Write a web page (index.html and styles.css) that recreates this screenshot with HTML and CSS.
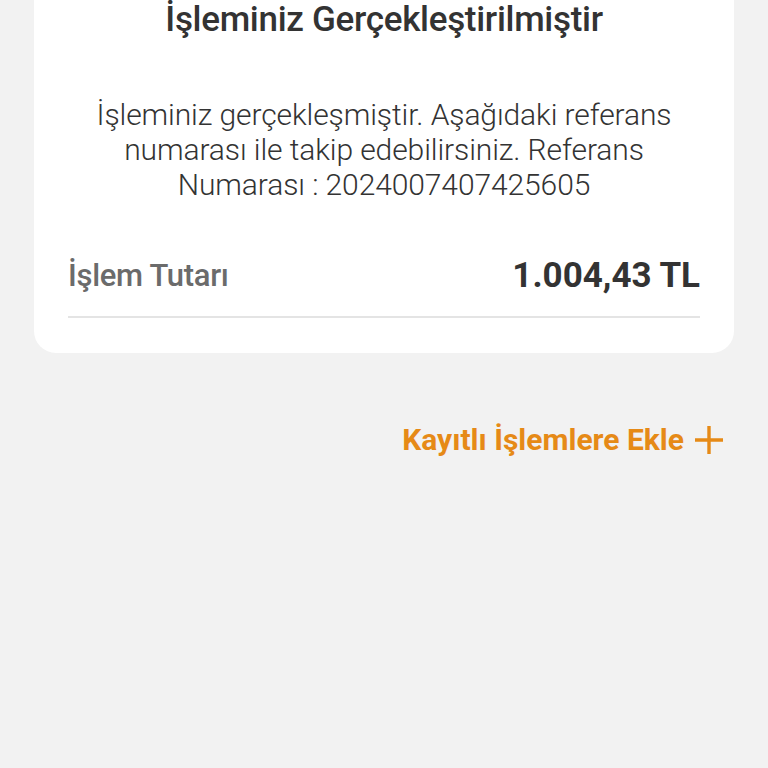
FILE: index.html
```html
<!DOCTYPE html>
<html lang="tr">
<head>
    <meta charset="UTF-8">
    <meta name="viewport" content="width=device-width, initial-scale=1.0">
    <title>İşlem Sonucu</title>
    <link rel="stylesheet" href="styles.css">
</head>
<body>

<div class="result-card">
    <h1 class="result-title">İşleminiz Gerçekleştirilmiştir</h1>

    <p class="result-text">
        İşleminiz gerçekleşmiştir. Aşağıdaki referans numarası ile takip edebilirsiniz. Referans Numarası : 2024007407425605
    </p>

    <div class="amount-row">
        <span class="amount-label">İşlem Tutarı</span>
        <span class="amount-value">1.004,43 TL</span>
    </div>
</div>

<div class="actions">
    <a href="#" class="save-link">
        Kayıtlı İşlemlere Ekle
        <svg class="plus-icon" viewBox="0 0 30 30" width="30" height="30">
            <path d="M15 1 V29 M1 15 H29" stroke="currentColor" stroke-width="3.4" fill="none"/>
        </svg>
    </a>
</div>

</body>
</html>
```

FILE: styles.css
```css
body {
    font-family: 'Roboto', sans-serif;
    background-color: #f2f2f2;
    color: #333;
    margin: 0;
    padding: 0;
}

.result-card {
    background-color: #fff;
    margin: -40px 34px 0;
    padding: 40px 34px 35px;
    border-radius: 22px;
}

.result-title {
    margin: 0;
    font-size: 35px;
    font-weight: 500;
    line-height: 40px;
    text-align: center;
    color: #333;
    letter-spacing: -0.3px;
}

.result-text {
    margin: 57px 20px 0;
    font-size: 30px;
    font-weight: 300;
    line-height: 35px;
    text-align: center;
    color: #333;
    letter-spacing: -0.1px;
}

.amount-row {
    display: flex;
    justify-content: space-between;
    align-items: center;
    margin-top: 54px;
    padding-bottom: 20px;
    border-bottom: 2px solid #e4e4e4;
    line-height: 40px;
}

.amount-label {
    font-size: 31px;
    font-weight: 500;
    color: #6b6b6b;
    letter-spacing: -0.3px;
}

.amount-value {
    font-size: 35px;
    font-weight: 700;
    color: #333;
}

.actions {
    display: flex;
    justify-content: flex-end;
    padding: 69px 44px 0;
}

.save-link {
    display: flex;
    align-items: center;
    gap: 10px;
    font-size: 30px;
    font-weight: 700;
    line-height: 36px;
    color: #e68a17;
    text-decoration: none;
    letter-spacing: 0;
}

.plus-icon {
    display: block;
}
```
